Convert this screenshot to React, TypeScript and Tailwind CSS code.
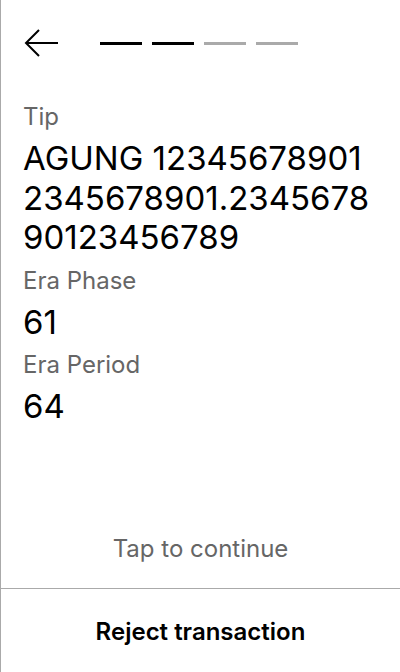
import React from "react";

const steps = [true, true, false, false];

function Field({ label, value }: { label: string; value: string }) {
  return (
    <div className="flex flex-col">
      <span className="text-[24px] leading-[32px] text-[#666666] mb-[6px]">{label}</span>
      <span className="text-[33px] leading-[39.5px] text-black break-all">{value}</span>
    </div>
  );
}

export default function App() {
  return (
    <div className="h-[672px] w-[400px] flex flex-col bg-white border-l border-[#aaaaaa] font-['Inter',sans-serif] overflow-hidden">
      <header className="h-[86px] flex items-center pl-[22px] shrink-0">
        <svg width="36" height="28" viewBox="0 0 36 28" fill="none" stroke="black" strokeWidth="2">
          <path d="M3 14H35" />
          <path d="M16 1L3 14L16 27" />
        </svg>
        <div className="flex gap-[10px] ml-[41px]">
          {steps.map((done, i) => (
            <div key={i} className={done ? "w-[42px] h-[3px] bg-black" : "w-[42px] h-[3px] bg-[#aaaaaa]"} />
          ))}
        </div>
      </header>

      <main className="flex flex-col gap-[7px] pl-[22px] pr-6 pt-[15px]">
        <Field label="Tip" value="AGUNG 123456789012345678901.234567890123456789" />
        <Field label="Era Phase" value="61" />
        <Field label="Era Period" value="64" />
      </main>

      <div className="flex-1" />

      <p className="text-center text-[24px] leading-[32px] text-[#666666] pb-[23px]">Tap to continue</p>
      <button className="h-[84px] shrink-0 border-t border-[#aaaaaa] pt-[2px] text-[24px] leading-[32px] font-semibold text-black">
        Reject transaction
      </button>
    </div>
  );
}
